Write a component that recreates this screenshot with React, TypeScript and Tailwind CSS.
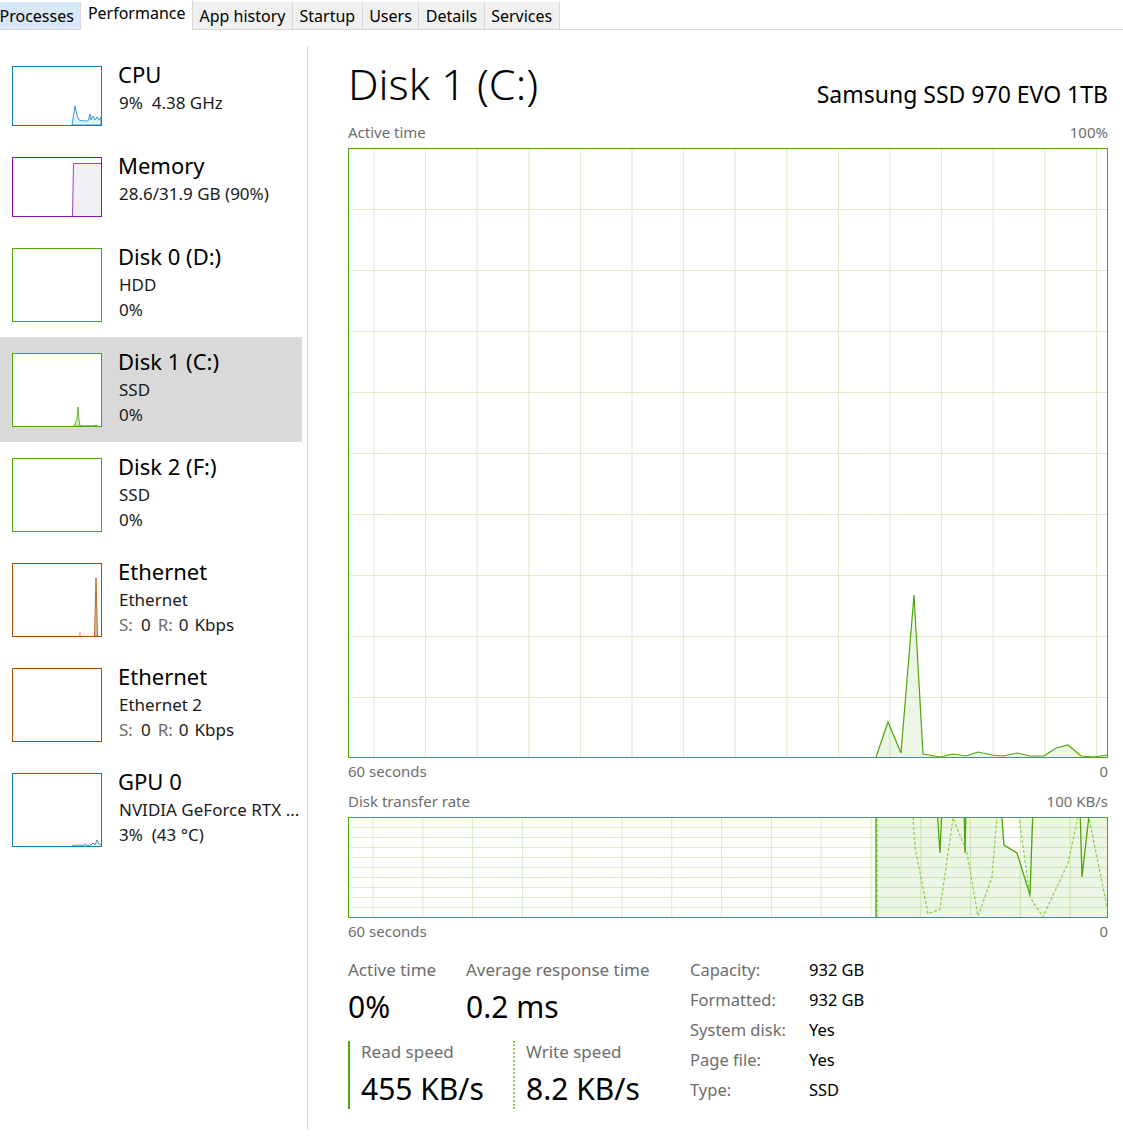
import React from "react";

const DISK = "#4da60c";
const GRID = "#d9ebc8";

function Thumb({ vb, w = 90, h, color, children }: { vb: string; w?: number; h: number; color: string; children?: React.ReactNode }) {
  const [x, y] = vb.split(" ").map(Number);
  return (
    <svg width={w} height={h} viewBox={vb} className="block">
      <rect x={x} y={y} width={w} height={h} fill="#ffffff" />
      {children}
      <rect x={x + 0.5} y={y + 0.5} width={w - 1} height={h - 1} fill="none" stroke={color} strokeWidth={1} />
    </svg>
  );
}

function Row({
  thumb,
  title,
  lines,
  small,
  selected,
}: {
  thumb: React.ReactNode;
  title: string;
  lines: React.ReactNode[];
  small?: boolean;
  selected?: boolean;
}) {
  return (
    <div
      className={`flex pl-[12px] pt-[8px] ${selected ? "bg-[#d9d9d9]" : ""} ${small ? "h-[91px]" : "h-[105px]"}`}
    >
      <div className="mt-[8px] shrink-0">{thumb}</div>
      <div className="ml-[16px] flex flex-col min-w-0">
        <div className="text-[22px] leading-[32px] text-black whitespace-nowrap">{title}</div>
        {lines.map((l, i) => (
          <div key={i} className="text-[17px] leading-[25px] text-[#1a1a1a] pl-px whitespace-pre">
            {l}
          </div>
        ))}
      </div>
    </div>
  );
}

function NetLine({ gray }: { gray: string }) {
  return (
    <span className="flex">
      <span className={gray}>S:</span>
      <span className="ml-[8px]">0</span>
      <span className={`ml-[7px] ${gray}`}>R:</span>
      <span className="ml-[6px]">0</span>
      <span className="ml-[6px]">Kbps</span>
    </span>
  );
}

function MainChart() {
  const verts = Array.from({ length: 15 }, (_, k) => 26 + k * 51.6);
  const hors = Array.from({ length: 9 }, (_, k) => 61 * (k + 1));
  const pts: [number, number][] = [
    [528, 609], [540, 574], [553, 605], [566, 447], [575, 606], [592, 609], [605, 606], [618, 608],
    [630, 604], [644, 607], [655, 608], [669, 605], [682, 608], [696, 608], [708, 600], [720, 597],
    [733, 608], [746, 609], [759, 607],
  ];
  const line = pts.map((p) => p.join(",")).join(" ");
  const fill = `528,609 ${line} 759,609`;
  return (
    <svg width={760} height={610} viewBox="0 0 760 610" className="block">
      <rect x={0} y={0} width={760} height={610} fill="#ffffff" />
      {verts.map((x) => (
        <line key={"v" + x} x1={x} y1={0} x2={x} y2={610} stroke={GRID} strokeWidth={1} />
      ))}
      {hors.map((y) => (
        <line key={"h" + y} x1={0} y1={y + 0.5} x2={760} y2={y + 0.5} stroke={GRID} strokeWidth={1} />
      ))}
      <polygon points={fill} fill="rgba(77,166,12,0.1)" />
      <polyline points={line} fill="none" stroke={DISK} strokeWidth={1.2} />
      <rect x={0.5} y={0.5} width={759} height={609} fill="none" stroke={DISK} strokeWidth={1} />
    </svg>
  );
}

function TransferChart() {
  const verts = Array.from({ length: 15 }, (_, k) => 25 + k * 49.8);
  const hors = Array.from({ length: 9 }, (_, k) => 10 * (k + 1));
  const read =
    "528,100 528,-10 589,-10 592,36 594,-10 616,-10 617,36 618,-10 653,-10 656,28 669,36 682,78 685,-10 732,-10 734,60 742,-10 760,-10";
  const write =
    "529,100 529,-10 564,-10 565,0 567,30 580,97 592,92 605,1 619,36 630,99 644,60 649,0 650,-10 670,-10 671,1 682,80 695,100 720,46 730,0 731,-10 740,-10 741,1 759,90";
  const fill = "528,100 528,0 653,0 656,28 669,36 681.5,76 671,0 760,0 760,100";
  return (
    <svg width={760} height={101} viewBox="0 0 760 101" className="block">
      <defs>
        <clipPath id="tc">
          <rect x={1} y={1} width={758} height={99} />
        </clipPath>
      </defs>
      <rect x={0} y={0} width={760} height={101} fill="#ffffff" />
      {verts.map((x) => (
        <line key={"v" + x} x1={x} y1={0} x2={x} y2={101} stroke={GRID} strokeWidth={1} />
      ))}
      {hors.map((y) => (
        <line key={"h" + y} x1={0} y1={y + 0.5} x2={760} y2={y + 0.5} stroke={GRID} strokeWidth={1} />
      ))}
      <g clipPath="url(#tc)">
        <polygon points={fill} fill="rgba(77,166,12,0.1)" />
        <polyline points={write} fill="none" stroke="#8ed14f" strokeWidth={1.3} strokeDasharray="3 2" />
        <polyline points={read} fill="none" stroke={DISK} strokeWidth={1.3} />
      </g>
      <rect x={0.5} y={0.5} width={759} height={100} fill="none" stroke={DISK} strokeWidth={1} />
    </svg>
  );
}

export default function App() {
  const tabs = ["Processes", "Performance", "App history", "Startup", "Users", "Details", "Services"];
  const gray = "text-[#6d6d6d]";
  return (
    <div className="w-[1123px] h-[1147px] bg-white overflow-hidden font-['Noto_Sans',sans-serif] text-black">
      {/* tab bar */}
      <div className="h-[30px] border-b border-[#d9d9d9] flex items-stretch -ml-[7px] bg-white">
        {tabs.map((t) => {
          const sel = t === "Performance";
          const hov = t === "Processes";
          return (
            <div
              key={t}
              className={`px-[6.5px] text-[16px] flex border-r border-[#d9d9d9] whitespace-nowrap ${
                sel
                  ? "bg-white items-start pt-[1px] -mb-px"
                  : hov
                  ? "bg-[#d9e8f7] items-center mt-[2px] pt-[1px]"
                  : "bg-[#f0f0f0] items-center mt-[2px] pt-[1px]"
              }`}
            >
              {t}
            </div>
          );
        })}
      </div>

      <div className="flex">
        {/* sidebar */}
        <div className="w-[302px] pt-[20px] shrink-0">
          <Row
            small
            title="CPU"
            lines={["9%  4.38 GHz"]}
            thumb={
              <Thumb vb="12 66 90 60" h={60} color="#117dbb">
                <polygon
                  points="72,125 75,106 77,115 79,120 84,121 88,121 90,114 91,120 93,116 95,120 97,117 99,120 101,117 101,125"
                  fill="rgba(17,125,187,0.1)"
                  stroke="#117dbb"
                  strokeWidth={0.8}
                />
              </Thumb>
            }
          />
          <Row
            small
            title="Memory"
            lines={["28.6/31.9 GB (90%)"]}
            thumb={
              <Thumb vb="12 157 90 60" h={60} color="#8b12ae">
                <polygon points="72.5,216 73.5,163.5 101,163.5 101,216" fill="#f2eff4" />
                <polyline points="72.5,216 73.5,163.5 101,163.5" fill="none" stroke="#8b12ae" strokeWidth={0.8} />
              </Thumb>
            }
          />
          <Row
            title="Disk 0 (D:)"
            lines={["HDD", "0%"]}
            thumb={<Thumb vb="12 248 90 74" h={74} color={DISK} />}
          />
          <Row
            selected
            title="Disk 1 (C:)"
            lines={["SSD", "0%"]}
            thumb={
              <Thumb vb="12 353 90 74" h={74} color={DISK}>
                <polygon
                  points="74,426 76,421 77,419 78,407 79,420 80,426 94,426 96,425 98,426"
                  fill="rgba(77,166,12,0.25)"
                  stroke={DISK}
                  strokeWidth={0.8}
                />
              </Thumb>
            }
          />
          <Row
            title="Disk 2 (F:)"
            lines={["SSD", "0%"]}
            thumb={<Thumb vb="12 458 90 74" h={74} color={DISK} />}
          />
          <Row
            title="Ethernet"
            lines={["Ethernet", <NetLine key="n1" gray={gray} />]}
            thumb={
              <Thumb vb="12 563 90 74" h={74} color="#a74f01">
                <polygon points="94.5,636 96,578 97.5,636" fill="rgba(167,79,1,0.35)" stroke="#a74f01" strokeWidth={0.8} />
                <polygon points="79,636 80,632 81,636" fill="none" stroke="#e08a60" strokeWidth={0.6} />
              </Thumb>
            }
          />
          <Row
            title="Ethernet"
            lines={["Ethernet 2", <NetLine key="n2" gray={gray} />]}
            thumb={<Thumb vb="12 668 90 74" h={74} color="#a74f01" />}
          />
          <Row
            title="GPU 0"
            lines={["NVIDIA GeForce RTX ...", "3%  (43 °C)"]}
            thumb={
              <Thumb vb="12 773 90 74" h={74} color="#117dbb">
                <polyline
                  points="72,846 74,845 76,845.5 79,845 82,845.5 85,844.5 88,845.5 91,845 93,843 95,845 97,840 99,844 101,845"
                  fill="rgba(17,125,187,0.1)"
                  stroke="#117dbb"
                  strokeWidth={0.8}
                />
              </Thumb>
            }
          />
        </div>

        {/* separator */}
        <div className="ml-[5px] mt-[16px] w-px h-[1084px] bg-[#d4d4d4] shrink-0" />

        {/* main */}
        <div className="ml-[40px] w-[760px] pt-[32px]">
          <div className="flex items-baseline justify-between">
            <div className="text-[43px] leading-[44px] font-light">Disk 1 (C:)</div>
            <div className="text-[23px] leading-[28px] relative top-[3px]">Samsung SSD 970 EVO 1TB</div>
          </div>
          <div className={`mt-[16px] flex justify-between text-[15px] leading-[20px] ${gray}`}>
            <span>Active time</span>
            <span>100%</span>
          </div>
          <div className="mt-[6px]">
            <MainChart />
          </div>
          <div className={`mt-[3px] flex justify-between text-[15px] leading-[20px] ${gray}`}>
            <span>60 seconds</span>
            <span>0</span>
          </div>
          <div className={`mt-[10px] flex justify-between text-[15px] leading-[20px] ${gray}`}>
            <span>Disk transfer rate</span>
            <span>100 KB/s</span>
          </div>
          <div className="mt-[6px]">
            <TransferChart />
          </div>
          <div className={`mt-[3px] flex justify-between text-[15px] leading-[20px] ${gray}`}>
            <span>60 seconds</span>
            <span>0</span>
          </div>

          {/* stats */}
          <div className="mt-[18px] flex">
            <div className="w-[342px] shrink-0">
              <div className="flex">
                <div className="w-[118px]">
                  <div className={`text-[17px] leading-[22px] ${gray}`}>Active time</div>
                  <div className="mt-[8px] text-[30px] leading-[36px]">0%</div>
                </div>
                <div>
                  <div className={`text-[17px] leading-[22px] whitespace-nowrap ${gray}`}>Average response time</div>
                  <div className="mt-[8px] text-[30px] leading-[36px]">0.2 ms</div>
                </div>
              </div>
              <div className="mt-[16px] flex">
                <div className="w-[165px] border-l-2 border-[#4da60c] pl-[11px] pb-[2px]">
                  <div className={`text-[17px] leading-[22px] ${gray}`}>Read speed</div>
                  <div className="mt-[8px] text-[30px] leading-[36px] whitespace-nowrap">455 KB/s</div>
                </div>
                <div className="border-l-2 border-dotted border-[#8ed14f] pl-[11px] pb-[2px]">
                  <div className={`text-[17px] leading-[22px] ${gray}`}>Write speed</div>
                  <div className="mt-[8px] text-[30px] leading-[36px] whitespace-nowrap">8.2 KB/s</div>
                </div>
              </div>
            </div>
            <div className="-mt-[4px] grid grid-cols-[119px_auto] auto-rows-[30px] text-[16.5px] leading-[30px]">
              <span className={gray}>Capacity:</span>
              <span>932 GB</span>
              <span className={gray}>Formatted:</span>
              <span>932 GB</span>
              <span className={gray}>System disk:</span>
              <span>Yes</span>
              <span className={gray}>Page file:</span>
              <span>Yes</span>
              <span className={gray}>Type:</span>
              <span>SSD</span>
            </div>
          </div>
        </div>
      </div>
    </div>
  );
}
